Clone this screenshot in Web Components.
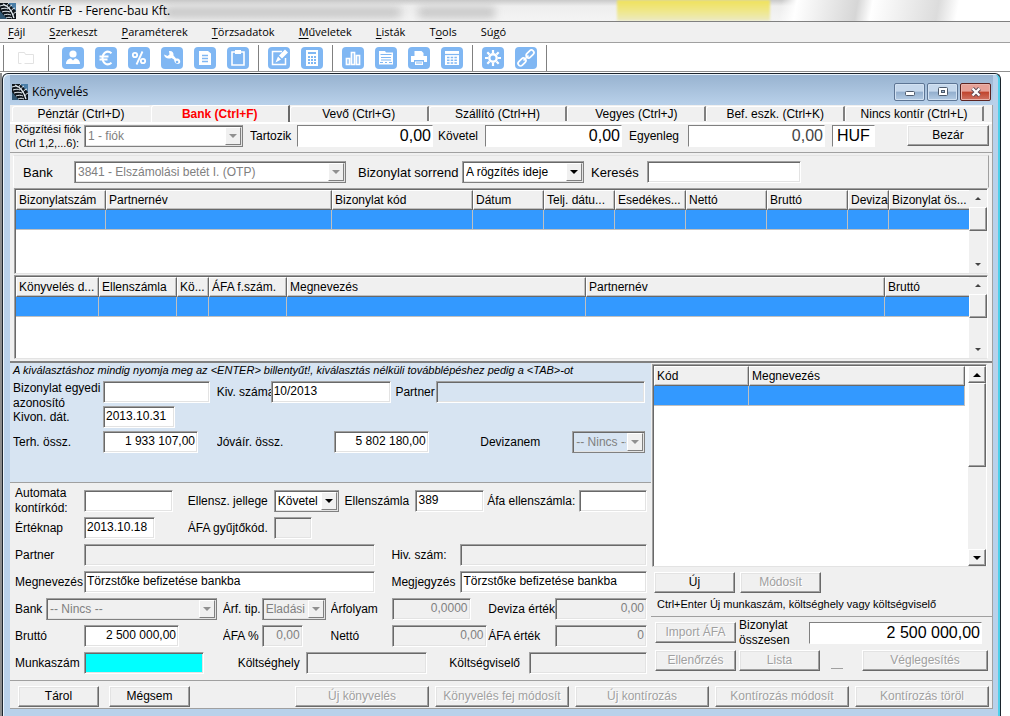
<!DOCTYPE html>
<html lang="hu">
<head>
<meta charset="utf-8">
<title>Kontír FB - Ferenc-bau Kft.</title>
<style>
  html { height: 100%; }
  body { margin: 0; min-height: 100%; display: flex; flex-direction: column; background: #fff;
    font: 12px/15px "Liberation Sans", Arial, sans-serif; color: #000; }
  kontir-app { flex: 1; }
</style>
</head>
<body>
<kontir-app></kontir-app>
<script>
const define = (name, render) => customElements.define(name, class extends HTMLElement {
  connectedCallback() {
    if (this.shadowRoot) return;
    const t = document.createElement('template');
    t.innerHTML = render(this, (k, d = '') => this.getAttribute(k) ?? d);
    this.attachShadow({ mode: 'open' }).append(t.content.cloneNode(true));
  }
});

/* Feather logo */
define('app-logo', () => `
<style>:host{display:block;width:16px;height:16px}svg{display:block}</style>
<svg width="16" height="16" viewBox="0 0 16 16" aria-hidden="true"><rect width="16" height="16" fill="#10161c"/>
<path d="M8 0h8v8z" fill="#4a7ea8"/><path d="M0 8l7 8H0z" fill="#2f5571"/>
<g fill="none" stroke="#e6eef4" stroke-width="1"><path d="M3 1c5 2 9 7 11 14" stroke-width="1.300"/><path d="M0 3c3-1 4-1 6 0M1 6c3-1 5-1 7 0M2 9c3-1 5-1 8 0M4 12c2-1 5-1 7 0M6 15c2-1 4-1 6 0"/><path d="M7 3c0-1 1-2 2-3M9 6c0-2 1-3 3-4M11 9c0-2 1-3 4-4M13 12c0-1 1-2 3-3"/></g></svg>`);

const ICONS = {
  user: '<circle cx="11" cy="7" r="3.600" fill="#fff"/><path d="M4 17c0-4 3-5.500 5-5.500l2 2 2-2c2 0 5 1.500 5 5.500z" fill="#fff"/>',
  euro: '<path d="M16.500 6.200C12 2.500 7.500 6 7.500 11s4.500 8.500 9 4.800M4.500 9.500h9M4.500 12.500h8" fill="none" stroke="#fff" stroke-width="2"/>',
  percent: '<path d="M14.500 4.500l-6 13" stroke="#fff" stroke-width="1.800"/><g fill="none" stroke="#fff" stroke-width="1.800"><circle cx="7" cy="8" r="2.200"/><circle cx="15" cy="14" r="2.200"/></g>',
  wrench: '<path d="M3 7.500l3.500 1.500 2-1.500L8 4c3-.5 5 1.500 4.500 4.500l2.500 3c3-.5 5 1.500 4 4.500a3.300 3.300 0 0 1-5.500-1.500l-.5-2L10.500 11C7 12.500 3.500 11 3 7.500z" fill="#fff"/><circle cx="16" cy="15" r="1.300" fill="#80b7f3"/>',
  doc: '<path d="M5 4h9l3 2.500V18H5z" fill="#fff"/><path d="M8 8.500h6M8 11.500h6M8 14.500h6" stroke="#80b7f3" stroke-width="1.300"/>',
  clip: '<path d="M5 5h12v13H5z" fill="none" stroke="#fff" stroke-width="1.600"/><path d="M8 3h6v4H8z" fill="#fff"/>',
  edit: '<path d="M14 4.500H4.500v13h13V11" fill="none" stroke="#fff" stroke-width="1.500"/><path d="M17 2.500l3 3-6 6-3-3zM10 9.500l3 3-5.500 3z" fill="#fff"/>',
  calc: '<path d="M5 3h12v16H5z" fill="#fff"/><path d="M7 6h8" stroke="#80b7f3" stroke-width="2"/><path d="M7 10h8M7 13h8M7 16h8" stroke="#80b7f3" stroke-width="1.800" stroke-dasharray="2 1"/>',
  bars: '<path d="M4.500 11.500h3v6h-3zM9.500 5.500h3v12h-3zM14.500 8.500h3v9h-3z" fill="none" stroke="#fff" stroke-width="1.700"/>',
  report: '<path d="M4 4h6l1 1.500h7v12H4z" fill="#fff"/><path d="M5.500 7.500h11M6 10.500h10M6 13h10M5 15.500h3M10 15.500h2M14 15.500h3" stroke="#80b7f3" stroke-width="1.200"/>',
  print: '<path d="M6.500 4h7l2 2v3h-9zM3 9h16v6h-3v-2H6v2H3z" fill="#fff"/><path d="M7 14.500h8v3.500H7z" fill="#fff"/><path d="M8 16h6" stroke="#80b7f3"/>',
  grid: '<path d="M4 4h14v14H4z" fill="#fff"/><path d="M4 7.500h14" stroke="#80b7f3" stroke-width="1.200"/><path d="M6 10.500h10M6 13.300h10M6 16h10" stroke="#80b7f3" stroke-width="1.500" stroke-dasharray="2.500 1.200"/>',
  gear: '<circle cx="11" cy="11" r="3.700" fill="none" stroke="#fff" stroke-width="2.400"/><path d="M11 3v3M11 16v3M3 11h3M16 11h3M5.300 5.300l2.200 2.200M14.500 14.500l2.200 2.200M5.300 16.700l2.200-2.200M14.500 7.500l2.200-2.200" stroke="#fff" stroke-width="2.200"/>',
  link: '<g fill="none" stroke="#fff" stroke-width="1.700"><rect x="10.500" y="4.500" width="9" height="5" rx="2.500" transform="rotate(-45 15 7)"/><rect x="2.500" y="12.500" width="9" height="5" rx="2.500" transform="rotate(-45 7 15)"/><path d="M8.500 13.500l5-5"/></g>'
};
define('tool-button', (el, a) => `
<style>:host{display:block}button{display:block;width:22px;height:22px;padding:0;border:0;border-radius:4px;background:#80b7f3}svg{display:block}</style>
<button type="button" aria-label="${a('label')}"><svg width="22" height="22" viewBox="0 0 22 22">${ICONS[a('icon')]}</svg></button>`);

/* Push button; the label is slotted */
define('push-button', (el) => `
<style>:host{display:block;flex:none}
button{width:100%;height:21px;padding:0;font:inherit;line-height:17px;color:#000;background:#f0f0f0;white-space:nowrap;
 border:1px solid;border-color:#fff #696969 #696969 #fff;box-shadow:inset -1px -1px #a0a0a0,inset 1px 1px #e3e3e3}
button:disabled{color:#a0a0a0;text-shadow:1px 1px #fff}</style>
<button type="button" ${el.hasAttribute('disabled') ? 'disabled' : ''}><slot></slot></button>`);

/* Label with a text box or a drop-down */
define('form-field', (el, a) => {
  const off = el.hasAttribute('disabled') ? 'disabled' : '';
  const cls = `${el.hasAttribute('num') ? 'num' : ''} ${a('look')}`;
  const ctl = el.hasAttribute('select')
    ? `<span class="box sel ${cls} ${off}"><select id="c" ${off}><option>${a('value')}</option></select><i></i></span>`
    : `<span class="box ${cls} ${off}"><input id="c" ${off} value="${a('value')}"></span>`;
  return `
<style>
:host{display:flex;height:22px;align-items:center;min-width:0}
label{flex:none;width:${a('lw', '0')}px;white-space:pre;overflow:hidden}
label.top{align-self:flex-start;overflow:visible}
label.tall{overflow:visible}
.box{box-sizing:border-box;height:22px;min-width:0;${a('cw') ? `flex:0 1 ${a('cw')}px` : 'flex:1'};display:flex;position:relative;
 background:var(--fill,#fff);border:1px solid;border-color:#a0a0a0 #fff #fff #a0a0a0;box-shadow:inset 1px 1px #696969,inset -1px -1px #e3e3e3}
.disabled{background:var(--off,#f0f0f0)}
input,select{flex:1;min-width:0;width:100%;box-sizing:border-box;margin:0;border:0;outline:0;background:none;font:inherit;font-size:12px;color:#000;
 padding:0 2px 1px 2px;opacity:1;appearance:none;border-radius:0}
.disabled input,.disabled select{color:#808080}
.num input{text-align:right}
.big input{font-size:16px;padding:0 1px}
.dim input{color:#444}
.code input{padding:0 4px}
.flat{border-color:#808080 #fff #fff #808080;box-shadow:none;background:#fff}
.white{background:#fff}
.sel select{padding:0 18px 0 3px}
.sel{border-right-color:#808080;border-bottom-color:#808080}
i{position:absolute;right:1px;top:1px;width:16px;height:18px;box-sizing:border-box;background:#f0f0f0;border:1px solid;
 border-color:#fff #808080 #808080 #fff;pointer-events:none}
i::after{content:"";position:absolute;left:3px;top:6px;border:4px solid transparent;border-top-color:#000;border-bottom:0}
.disabled i::after{border-top-color:#909090}
</style>
<label for="c" class="${a('lpos')}">${a('label').replace('|', '\n')}</label>${ctl}`;
});

define('scroll-bar', (el, a) => `
<style>
:host{display:flex;flex-direction:column;width:18px;background:#f0f0f0}
b{box-sizing:border-box;height:17px;display:flex;align-items:center;justify-content:center}
b::after{content:"";border:3px solid transparent;border-bottom-color:#444;border-top:0}
b.dn::after{border:3px solid transparent;border-top-color:#444;border-bottom:0}
.raised b,.thumb{border:1px solid;border-color:#fff #696969 #696969 #fff;box-shadow:inset -1px -1px #a0a0a0}
.raised b::after{border-width:0 4px 4px;border-bottom-color:#000}.raised b.dn::after{border-width:4px 4px 0;border-top-color:#000}
.bar{flex:1;display:flex;flex-direction:column}
.thumb{box-sizing:border-box;height:${a('thumb', '24')}px;margin-bottom:auto}
</style>
<div class="bar ${a('look')}"><b></b><div class="thumb"></div><b class="dn"></b></div>`);

/* Data grid: cols is "Heading:width;…" */
define('data-grid', (el, a) => {
  const cols = a('cols').split(';').map(c => c.split(':'));
  return `
<style>
:host{display:flex;box-sizing:border-box;background:#fff;border:1px solid;border-color:#a0a0a0 #fff #e3e3e3 #a0a0a0;box-shadow:inset 1px 1px #696969;padding:1px 0 0 1px}
.wrap{flex:1;min-width:0}
table{width:100%;table-layout:fixed;border-collapse:separate;border-spacing:0}
th{height:20px;box-sizing:border-box;padding:0 0 0 2px;text-align:left;font-weight:400;white-space:nowrap;overflow:hidden;background:#f0f0f0;
 border:1px solid;border-color:#fff #696969 #696969 #fff;box-shadow:inset -1px -1px #c0c0c0}
td{height:20px;box-sizing:border-box;padding:0;background:#3399ff;border:solid #c0c0c0;border-width:0 1px 1px 0}
scroll-bar{margin-left:${a('gap', '0')}px}
</style>
<div class="wrap"><table><colgroup>${cols.map(c => `<col style="width:${c[1]}px">`).join('')}</colgroup>
<thead><tr>${cols.map(c => `<th scope="col">${c[0]}</th>`).join('')}</tr></thead>
<tbody><tr>${cols.map(() => '<td></td>').join('')}</tr></tbody></table></div>
<scroll-bar thumb="${a('thumb', '24')}" look="${a('look')}"></scroll-bar>`;
});

define('tab-strip', (el, a) => `
<style>
:host{display:flex;height:17px;padding:0 8px 0 2px;background:#f0f0f0;border-bottom:2px solid #fff}
button{flex:1;min-width:0;margin:1px 0 0;padding:0;border:0;border-left:1px solid #fff;border-top:1px solid #fff;border-right:2px solid #808080;border-radius:3px 0 0 0;background:none;font:inherit;color:#000;height:15px;line-height:13px;white-space:nowrap}
button:first-of-type{border-right-color:#f0f0f0}
button.on{margin-top:0;height:17px;line-height:15px;color:#f00;font-weight:700;border-right-color:#696969}
</style>
${a('tabs').split(';').map(t => `<button type="button" role="tab" class="${t === a('active') ? 'on' : ''}">${t}</button>`).join('')}`);

define('menu-bar', () => `
<style>
:host{display:flex;height:20px;align-items:center;background:#f0f0f0;border-top:1px solid #808080;border-bottom:1px solid #a0a0a0;font:11px/16px "Open Sans","Noto Sans",sans-serif;padding-left:8px;gap:24px}
a{color:#000;text-decoration:none;white-space:nowrap}
u{text-underline-offset:2px}
</style>
<a href="#"><u>F</u>ájl</a><a href="#"><u>S</u>zerkeszt</a><a href="#"><u>P</u>araméterek</a><a href="#"><u>T</u>örzsadatok</a><a href="#"><u>M</u>űveletek</a><a href="#"><u>L</u>isták</a><a href="#">T<u>o</u>ols</a><a href="#">Sú<u>g</u>ó</a>`);

define('tool-bar', () => {
  const g = (...n) => `<div>${n.map(i => `<tool-button icon="${i}" label="${i}"></tool-button>`).join('')}</div>`;
  return `
<style>
:host{display:flex;height:29px;align-items:center;background:#fff;padding:1px 0 0 3px;box-sizing:border-box;border-bottom:1px solid #909090}
div{display:flex;height:26px;align-items:center;gap:11px;padding:0 9px;border-left:1px solid #808080}
div:nth-of-type(2){padding-left:13px}
div:first-of-type{padding:0 14px}
div:last-of-type{padding:0}
svg{display:block}
</style>
<div><svg width="16" height="16" viewBox="0 0 16 16" fill="none" stroke="#e2e2e2"><path d="M3.500 13.500h-3v-11h6l1 2h8v9h-9"/></svg></div>
${g('user', 'euro', 'percent', 'wrench', 'doc', 'clip')}${g('edit', 'calc')}${g('bars', 'report', 'print', 'grid')}${g('gear', 'link')}<div></div>`;
});

define('title-bar', () => `
<style>
:host{display:flex;height:21px;align-items:center;position:relative;overflow:hidden;background:linear-gradient(#c9c9c9,#eee 6px,#f4f4f4)}
app-logo{flex:none}
h1{margin:0 0 0 5px;font:12px/16px "Open Sans","Noto Sans",sans-serif;white-space:pre;position:relative}
.glass{position:absolute;inset:0;background:linear-gradient(100deg,transparent 770px,#fff 785px,#d6d6d6 845px,#fff 860px,#dcdcdc 925px,#fff 945px)}
.tab{position:absolute;left:617px;width:153px;top:0;bottom:0;background:linear-gradient(#efe25a,#efe88f 12px,#eceac4);filter:blur(1px)}
.haze{position:absolute;left:165px;top:7px;width:330px;height:11px;background:linear-gradient(90deg,#aaa 0 232px,transparent 240px 250px,#aaa 256px);opacity:.6;filter:blur(4px)}
</style>
<div class="glass"></div><div class="haze"></div><div class="tab"></div><app-logo></app-logo><h1>Kontír FB  - Ferenc-bau Kft.</h1>`);

define('window-caption', () => `
<style>
:host{display:flex;height:30px;align-items:center;background:linear-gradient(#98b3d0,#b9d1ea);padding:4px 2px 0 2px;box-sizing:border-box;gap:4px;font:12px/16px "Open Sans","Noto Sans",sans-serif}
h2{margin:0 auto 0 0;font:inherit}
div{display:flex;gap:2px}
button{width:31px;height:18px;padding:0;border:1px solid #5d7594;border-radius:2px;background:linear-gradient(#c6d8ec 45%,#92aecd 50%,#b4cbe4);box-shadow:inset 0 0 0 1px #d3e2f2;display:flex;align-items:center;justify-content:center}
button.x{border-color:#5c2320;background:linear-gradient(#e6a197 45%,#c0432c 50%,#cf7464);box-shadow:inset 0 0 0 1px #e9b3aa}
</style>
<app-logo></app-logo><h2>Könyvelés</h2>
<div><button type="button" aria-label="Kis méret"><svg width="12" height="10"><rect x="1.500" y="4.500" width="9" height="4" rx="1" fill="#fff" stroke="#4d5a6c"/></svg></button>
<button type="button" aria-label="Teljes méret"><svg width="12" height="10"><rect x="1.500" y=".5" width="9" height="8" rx="1" fill="#fff" stroke="#4d5a6c"/><rect x="4.500" y="3.500" width="3" height="2" fill="#9db6d2" stroke="#4d5a6c"/></svg></button>
<button type="button" class="x" aria-label="Bezárás"><svg width="12" height="10" viewBox="0 0 12 10"><path d="M2.500 1.500l7 7M9.500 1.500l-7 7" stroke="#5a4a55" stroke-width="4"/><path d="M2.500 1.500l7 7M9.500 1.500l-7 7" stroke="#fff" stroke-width="2.300"/></svg></button></div>`);

define('kontir-app', () => `
<style>
:host{display:flex;flex-direction:column}
.desk{flex:1;display:flex;margin-top:1px;border-left:2px solid #8c8c8c;padding-right:9px;background:#fff}
.win{flex:1;min-width:0;border:1px solid #1c242c;border-bottom:0;border-radius:6px 6px 0 0;background:#b9d1ea;box-shadow:inset 1px 1px #eaf3fb,inset -2px 0 #4fd0ea;padding:1px 7px 6px;box-sizing:border-box}
.panel{background:#f0f0f0;border-bottom:1px solid #a0a0a0;border-right:1px solid #a0a0a0}
.sum{display:flex;align-items:flex-start;height:27px;padding:1px 3px 0 5px;border-bottom:1px solid #a0a0a0}
.small{font-size:11px;line-height:14px}
.filter{display:flex;font-size:13px;padding:5px 0 6px 9px;margin:2px 3px 0 3px;border:1px solid;border-color:#e3e3e3 #a0a0a0 #f0f0f0 #fff;height:20px}
.grids{padding:0 4px 2px;border-bottom:2px solid #808080}
.grids data-grid{height:86px}
.grids data-grid+data-grid{height:84px;margin-top:1px}
.body{display:grid;grid-template-columns:642fr 340fr}
.head{background:#d7e4f2;--off:#d7e4f2;display:flex;flex-direction:column;gap:3px;height:120px;box-sizing:border-box;padding:0 6px 0 3px;border-bottom:1px solid #a0a0a0}
p{margin:0;font-size:11px;line-height:15px;white-space:nowrap}
.head p{font-style:italic}
.entry{display:flex;flex-direction:column;gap:5px;padding:7px 4px 6px 5px}
.row{display:grid}
.side{display:flex;flex-direction:column;padding-top:1px}
.side data-grid{flex:1;margin:0 5px 5px 1px}
.btns{display:flex;gap:5px;padding-left:3px}
.side p{padding:4px 0 4px 6px}
.total{display:grid;grid-template-columns:81px 81px 1fr;gap:6px 3px;border-top:1px solid #a0a0a0;padding:5px 4px 9px 4px}
.total form-field{grid-column:2/4;margin-right:6px}
.last{display:flex;justify-content:space-between;padding-left:8px}
.dash{width:12px;height:18px;border-bottom:1px solid #a0a0a0}
.foot{display:flex;gap:6px;padding:5px 3px 1px 8px;border-top:1px solid #a0a0a0}
.foot push-button{width:134px}
.foot .n{width:81px;margin-right:4px}
.foot .f{margin-left:auto}
</style>
<title-bar></title-bar><menu-bar></menu-bar><tool-bar></tool-bar>
<div class="desk"><div class="win">
<window-caption></window-caption>
<div class="panel">
<tab-strip active="Bank (Ctrl+F)" tabs="Pénztár (Ctrl+D);Bank (Ctrl+F);Vevő (Ctrl+G);Szállító (Ctrl+H);Vegyes (Ctrl+J);Bef. eszk. (Ctrl+K);Nincs kontír (Ctrl+L)"></tab-strip>
<div class="sum">
<form-field class="small" lpos="tall" style="flex:0 0 235px" select disabled look="white" lw="69" cw="159" label="Rögzítési fiók|(Ctrl 1,2,...6):" value="1 - fiók"></form-field>
<form-field style="flex:0 0 188px" look="flat big" num lw="47" cw="136" label="Tartozik" value="0,00"></form-field>
<form-field style="flex:0 0 191px" look="flat big" num lw="47" cw="137" label="Követel" value="0,00"></form-field>
<form-field style="flex:0 0 203px" look="flat big dim" num lw="59" cw="137" label="Egyenleg" value="0,00"></form-field>
<form-field style="flex:0 0 43px" look="flat big code" cw="43" value="HUF"></form-field>
<push-button style="width:82px;margin-left:auto">Bezár</push-button>
</div>
<div class="filter">
<form-field style="flex:0 0 335px" select disabled look="white" lw="51" cw="272" label="Bank" value="3841 - Elszámolási betét I. (OTP)"></form-field>
<form-field style="flex:0 0 233px" select lw="104" cw="122" label="Bizonylat sorrend" value="A rögzítés ideje"></form-field>
<form-field style="flex:0 0 210px" lw="56" cw="154" label="Keresés"></form-field>
</div>
<div class="grids">
<data-grid cols="Bizonylatszám:90;Partnernév:226;Bizonylat kód:141;Dátum:71;Telj. dátu...:71;Esedékes...:71;Nettó:81;Bruttó:81;Deviza:41;Bizonylat ös...:82"></data-grid>
<data-grid cols="Könyvelés d...:83;Ellenszámla:78;Kö...:32;ÁFA f.szám.:78;Megnevezés:299;Partnernév:299;Bruttó:86"></data-grid>
</div>
<div class="body">
<div>
<div class="head">
<p>A kiválasztáshoz mindig nyomja meg az &lt;ENTER&gt; billentyűt!, kiválasztás nélküli továbblépéshez pedig a &lt;TAB&gt;-ot</p>
<div class="row" style="grid-template-columns:204fr 179fr 250fr">
<form-field lpos="top" lw="90" cw="107" label="Bizonylat egyedi|azonosító"></form-field>
<form-field lw="54" cw="120" label="Kiv. száma" value="10/2013"></form-field>
<form-field lw="41" disabled label="Partner"></form-field></div>
<div class="row"><form-field lw="90" cw="72" label="Kivon. dát." value="2013.10.31"></form-field></div>
<div class="row" style="grid-template-columns:204fr 264fr 165fr">
<form-field lw="90" cw="95" num label="Terh. össz." value="1 933 107,00"></form-field>
<form-field lw="117" cw="95" num label="Jóváír. össz." value="5 802 180,00"></form-field>
<form-field lw="92" select disabled label="Devizanem" value="-- Nincs --"></form-field></div>
</div>
<div class="entry">
<div class="row" style="grid-template-columns:173fr 157fr 143fr 160fr">
<form-field lpos="tall" lw="69" cw="89" label="Automata|kontírkód:"></form-field>
<form-field select lw="86" cw="65" label="Ellensz. jellege" value="Követel"></form-field>
<form-field lw="71" cw="69" label="Ellenszámla" value="389"></form-field>
<form-field lw="92" label="Áfa ellenszámla:"></form-field></div>
<div class="row" style="grid-template-columns:173fr 460fr">
<form-field lw="69" cw="71" label="Értéknap" value="2013.10.18"></form-field>
<form-field disabled lw="86" cw="38" label="ÁFA gyűjtőkód."></form-field></div>
<div class="row" style="grid-template-columns:377fr 256fr">
<form-field disabled lw="69" cw="291" label="Partner"></form-field>
<form-field disabled lw="69" label="Hiv. szám:"></form-field></div>
<div class="row" style="grid-template-columns:377fr 256fr">
<form-field lw="69" cw="291" label="Megnevezés" value="Törzstőke befizetése bankba"></form-field>
<form-field lw="69" label="Megjegyzés" value="Törzstőke befizetése bankba"></form-field></div>
<div class="row" style="grid-template-columns:208fr 108fr 158fr 159fr">
<form-field select disabled lw="31" cw="171" label="Bank" value="-- Nincs --"></form-field>
<form-field select disabled lw="39" cw="64" label="Árf. tip." value="Eladási"></form-field>
<form-field disabled num lw="61" cw="79" label="Árfolyam" value="0,0000"></form-field>
<form-field disabled num lw="67" label="Deviza érték" value="0,00"></form-field></div>
<div class="row" style="grid-template-columns:208fr 108fr 158fr 159fr">
<form-field num lw="69" cw="95" label="Bruttó" value="2 500 000,00"></form-field>
<form-field disabled num lw="39" cw="41" label="ÁFA %" value="0,00"></form-field>
<form-field disabled num lw="61" cw="95" label="Nettó" value="0,00"></form-field>
<form-field disabled num lw="67" label="ÁFA érték" value="0"></form-field></div>
<div class="row" style="grid-template-columns:223fr 212fr 198fr">
<form-field style="--fill:#0ff" lw="69" cw="120" label="Munkaszám"></form-field>
<form-field disabled lw="68" cw="121" label="Költséghely"></form-field>
<form-field disabled lw="80" label="Költségviselő"></form-field></div>
</div>
</div>
<div class="side">
<data-grid look="raised" gap="3" thumb="84" cols="Kód:95;Megnevezés:216"></data-grid>
<div class="btns"><push-button style="width:81px">Új</push-button><push-button style="width:81px" disabled>Módosít</push-button></div>
<p>Ctrl+Enter Új munkaszám, költséghely vagy költségviselő</p>
<div class="total">
<push-button disabled>Import ÁFA</push-button>
<form-field look="flat big" num lw="70" label="Bizonylat|összesen" value="2 500 000,00" lpos="tall"></form-field>
<push-button disabled>Ellenőrzés</push-button><push-button disabled>Lista</push-button>
<div class="last"><span class="dash"></span><push-button style="width:126px" disabled>Véglegesítés</push-button></div>
</div>
</div>
</div>
<div class="foot">
<push-button class="n">Tárol</push-button><push-button class="n">Mégsem</push-button>
<push-button class="f" disabled>Új könyvelés</push-button><push-button disabled>Könyvelés fej módosít</push-button><push-button disabled>Új kontírozás</push-button><push-button disabled>Kontírozás módosít</push-button><push-button disabled>Kontírozás töröl</push-button>
</div>
</div>
</div></div>`);
</script>
</body>
</html>
